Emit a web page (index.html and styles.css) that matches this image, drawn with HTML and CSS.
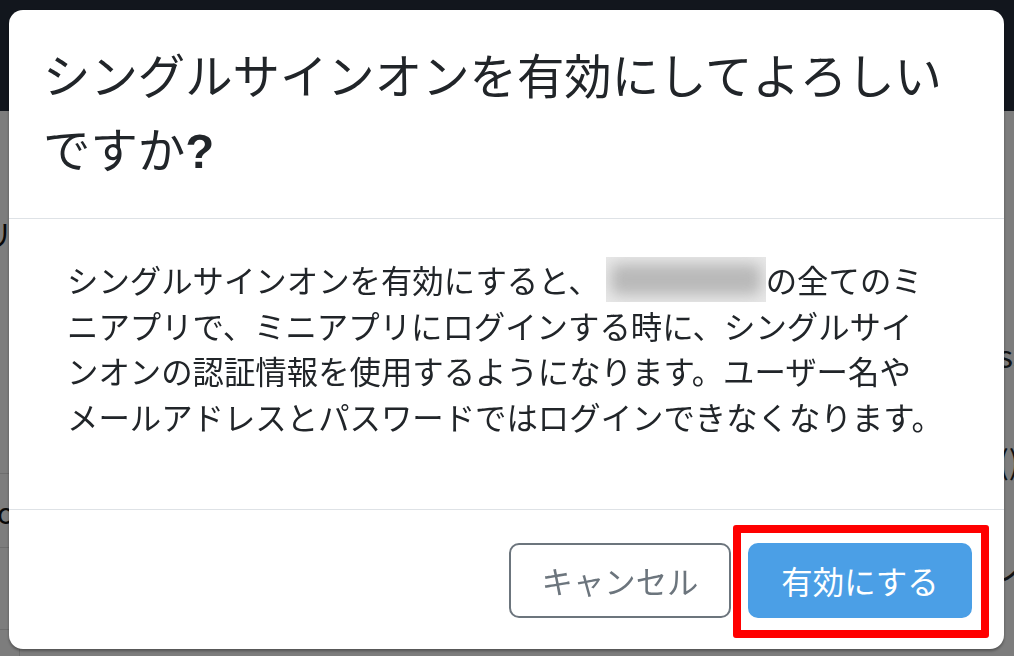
FILE: index.html
```html
<!DOCTYPE html>
<html lang="ja">
<head>
<meta charset="utf-8">
<title>シングルサインオン</title>
<link rel="stylesheet" href="styles.css">
</head>
<body>
<div class="page">
  <header class="topbar"></header>
  <main class="content">
    <aside class="side">
      <div class="side-row side-row--first">アプリ</div>
      <div class="side-row">lo</div>
      <div class="side-row side-row--third"></div>
      <div class="side-row side-row--last"></div>
    </aside>
    <section class="main-col">
      <div class="main-row">ss</div>
      <div class="main-row">()</div>
      <div class="main-row">ノ</div>
    </section>
  </main>
</div>

<div class="backdrop">
  <div class="modal">
    <div class="modal-header">
      <h1 class="modal-title">シングルサインオンを有効にしてよろしいですか<span class="q">?</span></h1>
    </div>
    <div class="modal-body">
      <p class="message">シングルサインオンを有効にすると、<span class="masked"><span class="masked-fill"></span></span>の全てのミ<br>ニアプリで、ミニアプリにログインする時に、シングルサイ<br>ンオンの認証情報を使用するようになります。ユーザー名や<br>メールアドレスとパスワードではログインできなくなります。</p>
    </div>
    <div class="modal-footer">
      <button class="btn btn-cancel" type="button">キャンセル</button>
      <button class="btn btn-primary" type="button">有効にする</button>
    </div>
  </div>
</div>
</body>
</html>
```

FILE: styles.css
```css
* {
  box-sizing: border-box;
}

html, body {
  margin: 0;
  padding: 0;
  width: 1014px;
  height: 656px;
  overflow: hidden;
}

body {
  font-family: "Noto Sans CJK JP", "Liberation Sans", sans-serif;
  color: #212529;
  background: #ffffff;
}

/* ---------- background page ---------- */
.page {
  height: 656px;
  display: flex;
  flex-direction: column;
}

.topbar {
  height: 111px;
  background: #242c3a;
  flex: none;
}

.content {
  flex: 1;
  min-height: 0;
  display: flex;
  justify-content: space-between;
  background: #fbfbfb;
  overflow: hidden;
}

.side {
  width: 200px;
  margin-left: -180px;
  display: flex;
  flex-direction: column;
  font-size: 30px;
  color: #111;
  border-right: 1px solid #ddd;
}

.side-row {
  height: 74px;
  flex: none;
  display: flex;
  align-items: center;
  justify-content: flex-end;
  border-bottom: 1px solid #dcdcdc;
  padding-right: 4px;
}

.side-row--first {
  height: 363px;
  align-items: flex-start;
  padding-top: 100px;
  padding-right: 6px;
}

.side-row--third {
  height: 82px;
}

.side-row--last {
  flex: 1;
  height: auto;
  border-bottom: 0;
}

.main-col {
  width: 30px;
  margin-right: -14px;
  display: flex;
  flex-direction: column;
  font-size: 32px;
  padding-top: 220px;
  gap: 60px;
}

/* ---------- modal ---------- */
.backdrop {
  position: fixed;
  inset: 0;
  background: rgba(0, 0, 0, 0.5);
  display: flex;
  align-items: flex-start;
}

.modal {
  margin: 10px 0 0 9px;
  width: 995px;
  background: #ffffff;
  border-radius: 14px;
  box-shadow: 0 2px 3px rgba(0, 0, 0, 0.35);
  display: flex;
  flex-direction: column;
}

.modal-header {
  padding: 27px 34px 33px;
  border-bottom: 1px solid #dee2e6;
}

.modal-title {
  margin: 0;
  font-size: 47.4px;
  line-height: 74px;
  font-weight: 400;
  color: #212529;
}

.modal-title .q {
  font-family: "Liberation Sans", sans-serif;
  font-weight: 700;
  line-height: 0;
}

.modal-body {
  padding: 38px 40px 31px 58px;
}

.message {
  margin: 0 0 39px;
  font-size: 31.4px;
  line-height: 45.5px;
  white-space: nowrap;
}

.masked {
  display: inline-block;
  width: 160px;
  height: 45px;
  margin: 0 0 0 6px;
  vertical-align: top;
  overflow: hidden;
  background: #e8e8e8;
  position: relative;
}

.masked-fill {
  position: absolute;
  inset: 7px 5px;
  background: #b9b9b9;
  border-radius: 8px;
  filter: blur(7px);
}

.modal-footer {
  border-top: 1px solid #dee2e6;
  padding: 33px 32px 31px;
  display: flex;
  justify-content: flex-end;
  gap: 17px;
}

.btn {
  font-family: "Noto Sans CJK JP", "Liberation Sans", sans-serif;
  font-size: 31.4px;
  height: 75px;
  border-radius: 10px;
  border: 2px solid transparent;
  display: flex;
  align-items: center;
  justify-content: center;
  line-height: 1;
  padding: 0;
}

.btn-cancel {
  width: 222px;
  background: #ffffff;
  border-color: #6c757d;
  color: #6c757d;
}

.btn-primary {
  width: 224px;
  background: #4b9fe6;
  border-color: #4b9fe6;
  color: #ffffff;
  position: relative;
}

.btn-primary::after {
  content: "";
  position: absolute;
  left: -17px;
  top: -20px;
  right: -19px;
  bottom: -22px;
  border: 8px solid #ff0000;
  border-radius: 3px;
}
```
